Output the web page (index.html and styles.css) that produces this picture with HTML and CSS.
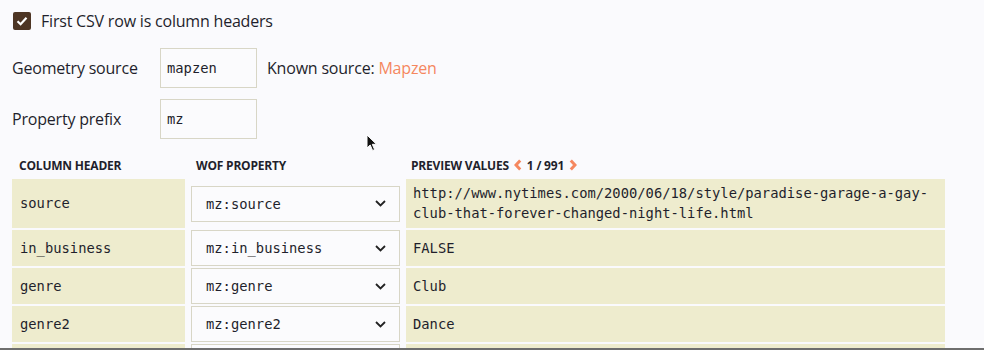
FILE: index.html
```html
<!DOCTYPE html>
<html lang="en">

<head>
    <meta charset="UTF-8">
    <title>CSV import</title>
    <link rel="stylesheet" href="styles.css">
</head>

<body>
    <div class="page">
        <label class="check-row">
            <span class="check">
                <svg width="12" height="10" viewBox="0 0 12 10"><path d="M1.5 5.2 L4.6 8.2 L10.5 1.8" fill="none" stroke="#fff" stroke-width="2.2"/></svg>
            </span>
            First CSV row is column headers
        </label>

        <div class="form-row">
            <span class="form-label">Geometry source</span>
            <div class="text-input">mapzen</div>
            <span class="known">Known source: <a class="orange">Mapzen</a></span>
        </div>
        <div class="form-row">
            <span class="form-label">Property prefix</span>
            <div class="text-input">mz</div>
        </div>

        <div class="grid">
            <div class="head head-first">COLUMN HEADER</div>
            <div class="head">WOF PROPERTY</div>
            <div class="head">PREVIEW VALUES
                <svg class="pager" width="8" height="12" viewBox="0 0 8 12"><path d="M6.2 1.5 L2 6 L6.2 10.5" fill="none" stroke="#f5875f" stroke-width="3"/></svg>
                <span class="count">1 / 991</span>
                <svg class="pager" width="8" height="12" viewBox="0 0 8 12"><path d="M1.8 1.5 L6 6 L1.8 10.5" fill="none" stroke="#f5875f" stroke-width="3"/></svg>
            </div>

            <div class="cell name">source</div>
            <div class="pick"><span>mz:source</span><svg width="11" height="7" viewBox="0 0 11 7"><path d="M1 1 L5.5 5.5 L10 1" fill="none" stroke="#222" stroke-width="1.8"/></svg></div>
            <div class="cell value">http://www.nytimes.com/2000/06/18/style/paradise-garage-a-gay-club-that-forever-changed-night-life.html</div>

            <div class="cell name">in_business</div>
            <div class="pick"><span>mz:in_business</span><svg width="11" height="7" viewBox="0 0 11 7"><path d="M1 1 L5.5 5.5 L10 1" fill="none" stroke="#222" stroke-width="1.8"/></svg></div>
            <div class="cell value">FALSE</div>

            <div class="cell name">genre</div>
            <div class="pick"><span>mz:genre</span><svg width="11" height="7" viewBox="0 0 11 7"><path d="M1 1 L5.5 5.5 L10 1" fill="none" stroke="#222" stroke-width="1.8"/></svg></div>
            <div class="cell value">Club</div>

            <div class="cell name">genre2</div>
            <div class="pick"><span>mz:genre2</span><svg width="11" height="7" viewBox="0 0 11 7"><path d="M1 1 L5.5 5.5 L10 1" fill="none" stroke="#222" stroke-width="1.8"/></svg></div>
            <div class="cell value">Dance</div>

            <!-- next row, only its top edge is in view -->
            <div class="cell name"></div>
            <div class="pick"></div>
            <div class="cell value"></div>
        </div>
    </div>

    <!-- mouse pointer caught in the capture -->
    <svg class="cursor" width="12" height="18" viewBox="0 0 12 18"><path d="M1 1 L1 14 L4.2 11 L6.6 16.5 L8.6 15.6 L6.3 10.3 L10.5 10.3 Z" fill="#111" stroke="#fff" stroke-width="1"/></svg>
    <div class="frame-edge"></div>
</body>

</html>
```

FILE: styles.css
```css
* {
    margin: 0;
    padding: 0;
    box-sizing: border-box;
}

html,
body {
    height: 350px;
    overflow: hidden;
}

body {
    background-color: #fafafd;
    color: #1f1f2c;
    font-family: "Open Sans", "Liberation Sans", sans-serif;
    font-size: 16px;
}

.page {
    padding: 12px 12px 0;
}

.check-row {
    display: flex;
    align-items: center;
    gap: 10px;
    height: 18px;
    margin-left: 1px;
    letter-spacing: -0.2px;
}

.check {
    width: 18px;
    height: 18px;
    border-radius: 2px;
    background-color: #4d3524;
    display: flex;
    align-items: center;
    justify-content: center;
}

.form-row {
    display: flex;
    align-items: center;
    margin-top: 11px;
    letter-spacing: -0.2px;
}

.check-row + .form-row {
    margin-top: 18px;
}

.form-label {
    width: 148px;
}

.text-input {
    width: 97px;
    height: 40px;
    padding: 0 6px;
    border: 1px solid #d8d6c6;
    background-color: #fbfbfd;
    font-family: "DejaVu Sans Mono", monospace;
    font-size: 13.8px;
    line-height: 38px;
    letter-spacing: 0;
}

.known {
    margin-left: 10px;
}

.orange {
    color: #f5875f;
}

.grid {
    display: grid;
    grid-template-columns: 173px 209px 539px;
    column-gap: 6px;
    row-gap: 2px;
    margin-top: 19px;
}

.head {
    display: flex;
    align-items: center;
    height: 14px;
    margin-bottom: 5px;
    padding-left: 5px;
    font-size: 12px;
    font-weight: 700;
    letter-spacing: -0.2px;
}

.head-first {
    padding-left: 7px;
}

.pager {
    margin: 0 5px 0 5px;
}

.count {
    font-weight: 700;
}

.cell {
    display: flex;
    align-items: center;
    padding: 4px 8px 5px;
    background-color: #eeecce;
    font-family: "DejaVu Sans Mono", monospace;
    font-size: 13.8px;
    line-height: 20px;
}

.value {
    padding-left: 7px;
}

.pick {
    align-self: center;
    display: flex;
    align-items: center;
    justify-content: space-between;
    height: 36px;
    padding: 0 13px 0 14px;
    border: 1px solid #d8d6c6;
    background-color: #fbfbfd;
    font-family: "DejaVu Sans Mono", monospace;
    font-size: 13.8px;
}

.cursor {
    position: absolute;
    left: 366px;
    top: 134px;
}

.frame-edge {
    position: fixed;
    left: 0;
    right: 0;
    bottom: 0;
    height: 2px;
    background-color: #6e6e6e;
}
```
